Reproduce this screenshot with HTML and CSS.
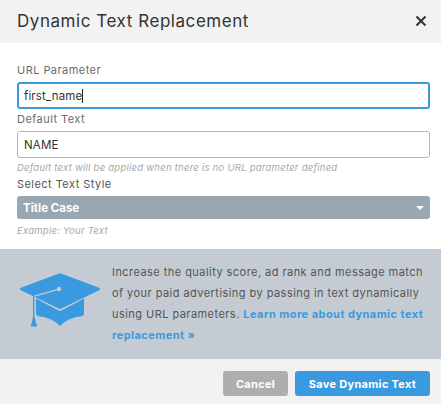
FILE: index.html
```html
<!DOCTYPE html>
<html lang="en">
<head>
    <meta charset="UTF-8">
    <title>Dynamic Text Replacement</title>
    <link rel="stylesheet" href="styles.css">
</head>
<body>
    <div class="modal">
        <div class="modal-header">
            <h1>Dynamic Text Replacement</h1>
            <svg class="close-icon" width="12" height="12" viewBox="0 0 12 12"><path d="M1.5 1.500l9 9M10.500 1.500l-9 9" stroke="#333" stroke-width="2" fill="none"/></svg>
        </div>
        <div class="modal-body">
            <label class="field-label first">URL Parameter</label>
            <div class="text-input focused">first_name<span class="caret"></span></div>
            <label class="field-label second">Default Text</label>
            <div class="text-input">NAME</div>
            <div class="hint">Default text will be applied when there is no URL parameter defined</div>
            <label class="field-label third">Select Text Style</label>
            <div class="select-box">
                <span>Title Case</span>
                <span class="select-arrow"></span>
            </div>
            <div class="hint example">Example: Your Text</div>
        </div>
        <div class="info-band">
            <svg class="cap-icon" width="80" height="56" viewBox="0 0 80 56">
                <!-- cap base, board, then the tassel cord -->
                <path d="M16 25.500L38.500 37.500c1 .5 2 .5 3 0L64 25.500V40c0 2-1 3-3 3.300-8 1-15 3.700-21 9.700-6-6-13-8.700-21-9.700-2-.3-3-1.300-3-3.300z" fill="#3a9ae0"/>
                <path d="M39 .4c.7-.2 1.300-.2 2 0L79 14.800c1.300.5 1.300 1.900 0 2.400L41.500 35.600c-1 .5-2 .5-3 0L1 17.200c-1.300-.5-1.300-1.900 0-2.400z" fill="#3a9ae0"/>
                <path d="M39 16L14.500 23" stroke="#c4cbd2" stroke-width="1.300" fill="none"/>
                <circle cx="39" cy="16" r="2.200" fill="#c4cbd2"/>
                <path d="M13.700 23.500V45" stroke="#3a9ae0" stroke-width="1.400" fill="none"/>
                <path d="M13 44h1.500l2.500 9-1.200 1-1-1-1 1-1-1-1 1-1-1z" fill="#3a9ae0"/>
            </svg>
            <p>Increase the quality score, ad rank and message match of your paid advertising by passing in text dynamically using URL parameters. <a href="#">Learn more about dynamic text replacement »</a></p>
        </div>
        <div class="modal-footer">
            <button class="btn btn-cancel">Cancel</button>
            <button class="btn btn-save">Save Dynamic Text</button>
        </div>
    </div>
</body>
</html>
```

FILE: styles.css
```css
:root {
    --blue: #3a9ae0;
    --text-color: #333333;
    --label-color: #6b6b6b;
}

* {
    box-sizing: border-box;
}

body {
    margin: 0;
    background-color: #ffffff;
    color: var(--text-color);
    font-family: "Inter", "Liberation Sans", sans-serif;
}

.modal {
    width: 441px;
    height: 404px;
    display: flex;
    flex-direction: column;
    overflow: hidden;
}

.modal-header {
    height: 43px;
    padding: 0 14px 2px 17px;
    display: flex;
    align-items: center;
    justify-content: space-between;
    background-color: #f2f2f2;
}

.modal-header h1 {
    margin: 0;
    font-size: 17px;
    font-weight: 400;
    letter-spacing: 0.55px;
}

.modal-body {
    height: 206px;
    padding: 0 11px 0 17px;
}

.field-label {
    display: block;
    font-size: 11px;
    line-height: 14px;
    letter-spacing: 0.45px;
    color: var(--label-color);
}

.field-label.first {
    margin-top: 20px;
    margin-bottom: 5px;
}

.field-label.second {
    margin-top: 3px;
    margin-bottom: 5px;
}

.field-label.third {
    color: #555555;
    margin-top: 3px;
    margin-bottom: 5px;
}

.text-input {
    height: 27px;
    padding: 0 6px;
    display: flex;
    align-items: center;
    font-size: 11.5px;
    letter-spacing: 0.15px;
    color: var(--text-color);
    background: #ffffff;
    border: 1px solid #b5b5b5;
    border-radius: 3px;
}

.text-input.focused {
    border: 2px solid var(--blue);
    padding: 0 5px;
}

.caret {
    width: 1px;
    height: 14px;
    background: #222222;
}

.hint {
    margin-top: 3px;
    font-size: 9.5px;
    line-height: 13px;
    font-style: italic;
    letter-spacing: 0.25px;
    color: #a8a8a8;
}

.select-box {
    height: 23px;
    padding: 0 6px;
    display: flex;
    align-items: center;
    justify-content: space-between;
    background-color: #9aa7b1;
    border-radius: 3px;
    color: #ffffff;
    font-size: 11.5px;
    font-weight: 700;
}

.select-arrow {
    border-left: 4px solid transparent;
    border-right: 4px solid transparent;
    border-top: 4px solid #ffffff;
}

.example {
    margin-top: 5px;
}

.info-band {
    height: 110px;
    padding: 0 10px 0 20px;
    display: flex;
    align-items: center;
    gap: 12px;
    background-color: #c4cbd2;
}

.cap-icon {
    flex: none;
    margin-top: -7px;
}

.info-band p {
    margin: 0;
    font-size: 11px;
    line-height: 21px;
    letter-spacing: 0.45px;
    color: #555555;
}

.info-band a {
    color: var(--blue);
    font-weight: 700;
    text-decoration: none;
}

.modal-footer {
    flex: 1;
    padding: 12px 11px 0 0;
    display: flex;
    justify-content: flex-end;
    gap: 7px;
    background-color: #f2f2f2;
}

.btn {
    height: 25px;
    border: none;
    border-radius: 3px;
    color: #ffffff;
    font-family: inherit;
    font-size: 11px;
    font-weight: 700;
    letter-spacing: 0.3px;
}

.btn-cancel {
    width: 65px;
    background-color: #aeaeae;
}

.btn-save {
    width: 135px;
    background-color: var(--blue);
}
```
